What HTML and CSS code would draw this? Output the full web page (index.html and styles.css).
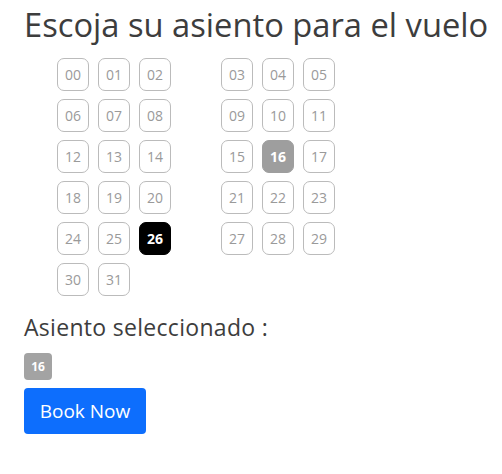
FILE: index.html
```html
<!DOCTYPE html>
<html lang="es">
<head>
<meta charset="utf-8">
<link rel="stylesheet" href="styles.css">
</head>
<body>
<main class="page">
  <h1 class="title">Escoja su asiento para el vuelo</h1>
  <div class="seats">
    <span class="seat">00</span><span class="seat">01</span><span class="seat">02</span><span class="aisle"></span><span class="seat">03</span><span class="seat">04</span><span class="seat">05</span>
    <span class="seat">06</span><span class="seat">07</span><span class="seat">08</span><span class="aisle"></span><span class="seat">09</span><span class="seat">10</span><span class="seat">11</span>
    <span class="seat">12</span><span class="seat">13</span><span class="seat">14</span><span class="aisle"></span><span class="seat">15</span><span class="seat selected">16</span><span class="seat">17</span>
    <span class="seat">18</span><span class="seat">19</span><span class="seat">20</span><span class="aisle"></span><span class="seat">21</span><span class="seat">22</span><span class="seat">23</span>
    <span class="seat">24</span><span class="seat">25</span><span class="seat taken">26</span><span class="aisle"></span><span class="seat">27</span><span class="seat">28</span><span class="seat">29</span>
    <span class="seat">30</span><span class="seat">31</span>
  </div>
  <p class="label">Asiento seleccionado :</p>
  <div class="chosen"><span class="badge">16</span></div>
  <button class="btn">Book Now</button>
</main>
</body>
</html>
```
FILE: styles.css
```css
html, body {
  margin: 0;
  padding: 0;
  background: #fff;
}
body {
  font-family: "Open Sans", "Noto Sans", sans-serif;
  color: #333;
}
.page {
  padding: 4px 0 0 24px;
}
.title {
  margin: 0;
  font-weight: 400;
  font-size: 32.7px;
  line-height: 42px;
  color: #3d3d3d;
  white-space: nowrap;
}
.seats {
  display: grid;
  grid-template-columns: repeat(7, 32px);
  grid-auto-rows: 33px;
  column-gap: 9px;
  row-gap: 8px;
  margin: 12px 0 0 33px;
}
.seat {
  box-sizing: border-box;
  display: flex;
  align-items: center;
  justify-content: center;
  border: 1px solid #bbb;
  border-radius: 7px;
  font-size: 14px;
  color: #9a9a9a;
  font-weight: 500;
}
.seat.selected {
  background: #9e9e9e;
  border-color: #9e9e9e;
  color: #fff;
  font-weight: 700;
}
.seat.taken {
  background: #000;
  border-color: #000;
  color: #fff;
  font-weight: 700;
}
.label {
  margin: 16px 0 0;
  font-size: 23px;
  line-height: 30px;
  letter-spacing: 0.3px;
  color: #3d3d3d;
}
.chosen {
  margin-top: 11px;
  display: flex;
}
.badge {
  display: flex;
  align-items: center;
  justify-content: center;
  width: 28px;
  height: 27px;
  border-radius: 4px;
  background: #a3a3a3;
  color: #fff;
  font-size: 12px;
  font-weight: 700;
}
.btn {
  margin-top: 8px;
  width: 122px;
  height: 46px;
  border: 0;
  border-radius: 4px;
  background: #0d6efd;
  color: #fff;
  font-family: "Open Sans", "Noto Sans", sans-serif;
  font-size: 19px;
  padding: 0;
}
```
